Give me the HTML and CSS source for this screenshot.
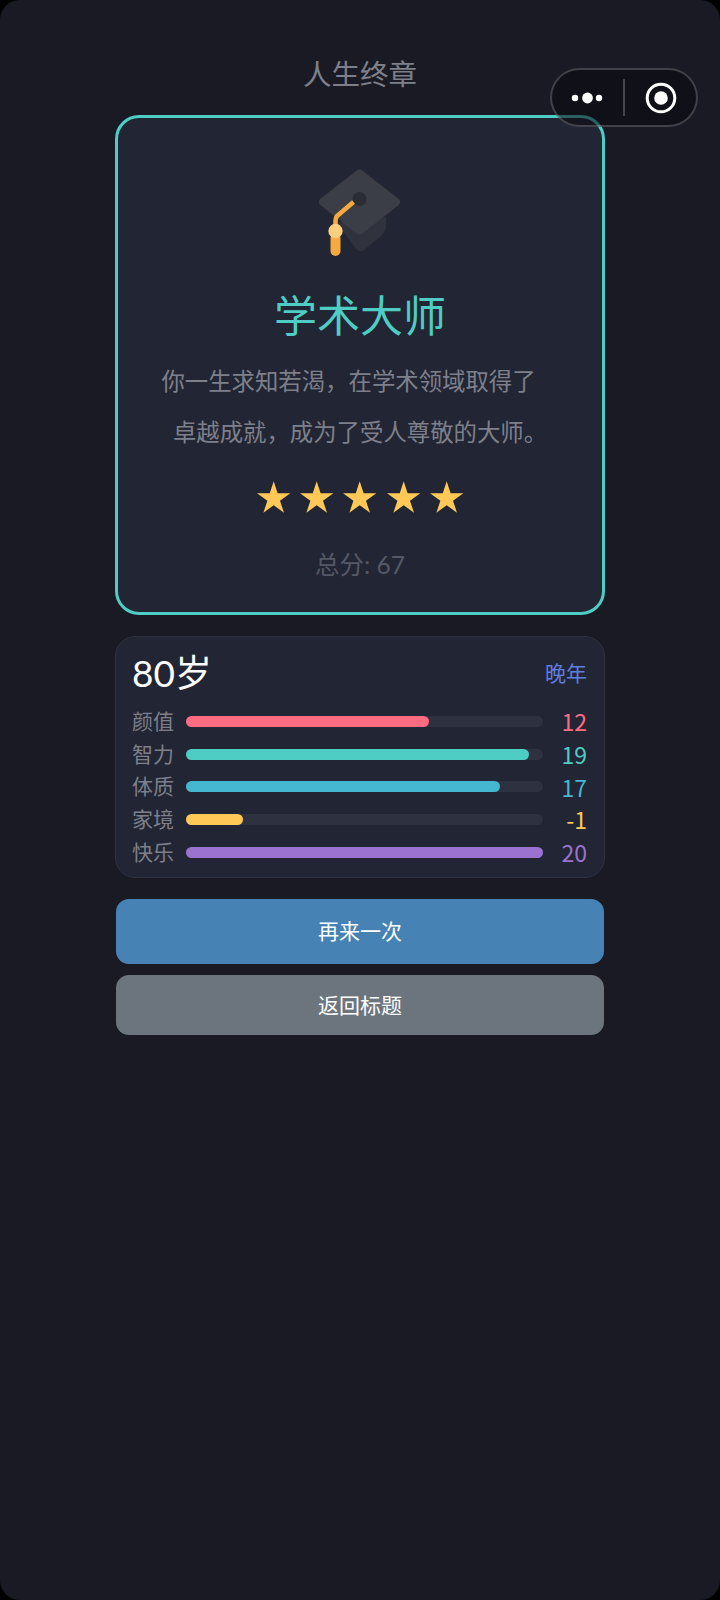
FILE: index.html
```html
<!DOCTYPE html>
<html lang="zh-CN">
<head>
  <meta charset="UTF-8" />
  <meta name="viewport" content="width=device-width, initial-scale=1.0"/>
  <title>人生终章</title>
  <link rel="stylesheet" href="styles.css">
</head>
<body>
  <div class="page">
    <!-- WeChat mini program capsule -->
    <div class="capsule">
      <svg class="capsule-more" width="36" height="14" viewBox="0 0 36 14">
        <circle cx="6" cy="7" r="3.2" fill="#fff"/>
        <circle cx="18.5" cy="7" r="5.4" fill="#fff"/>
        <circle cx="30" cy="7" r="3.2" fill="#fff"/>
      </svg>
      <div class="capsule-line"></div>
      <svg class="capsule-close" width="32" height="32" viewBox="0 0 32 32">
        <circle cx="16" cy="16" r="13.8" fill="none" stroke="#fff" stroke-width="3"/>
        <circle cx="16" cy="16" r="6.8" fill="#fff"/>
      </svg>
    </div>

    <div class="page-title">人生终章</div>

    <div class="ending-card">
      <svg class="ending-icon" width="90" height="90" viewBox="0 0 90 90">
        <path d="M22 56 L41 82 Q45 86 49 83 L66 69 Q73 62 71 50 Z" fill="#30333d"/>
        <polygon points="8,35 44.5,6.5 81,35 44.5,63.5" fill="#3b3e46" stroke="#3b3e46" stroke-width="8" stroke-linejoin="round"/>
        <circle cx="44.5" cy="32" r="7" fill="#2a2d35"/>
        <path d="M38.5 35 L22 49 Q20.5 51 20.5 54 L20.5 64" fill="none" stroke="#f6a93f" stroke-width="4.6"/>
        <rect x="15.5" y="66" width="10" height="23" rx="5" fill="#f6a93f"/>
        <circle cx="20.5" cy="64" r="7.2" fill="#f8cf7f"/>
      </svg>
      <div class="ending-name">学术大师</div>
      <div class="ending-desc">
        <div class="desc-line first">你一生求知若渴，在学术领域取得了</div>
        <div class="desc-line">卓越成就，成为了受人尊敬的大师。</div>
      </div>
      <div class="stars">
        <svg class="star" viewBox="0 0 34 32"><polygon points="17,0 21,12.2 34,12.2 23.4,19.8 27.5,32 17,24.4 6.5,32 10.6,19.8 0,12.2 13,12.2"/></svg>
        <svg class="star" viewBox="0 0 34 32"><polygon points="17,0 21,12.2 34,12.2 23.4,19.8 27.5,32 17,24.4 6.5,32 10.6,19.8 0,12.2 13,12.2"/></svg>
        <svg class="star" viewBox="0 0 34 32"><polygon points="17,0 21,12.2 34,12.2 23.4,19.8 27.5,32 17,24.4 6.5,32 10.6,19.8 0,12.2 13,12.2"/></svg>
        <svg class="star" viewBox="0 0 34 32"><polygon points="17,0 21,12.2 34,12.2 23.4,19.8 27.5,32 17,24.4 6.5,32 10.6,19.8 0,12.2 13,12.2"/></svg>
        <svg class="star" viewBox="0 0 34 32"><polygon points="17,0 21,12.2 34,12.2 23.4,19.8 27.5,32 17,24.4 6.5,32 10.6,19.8 0,12.2 13,12.2"/></svg>
      </div>
      <div class="total-score">总分: 67</div>
    </div>

    <div class="stats-card">
      <div class="stats-head">
        <span class="age">80岁</span>
        <span class="stage">晚年</span>
      </div>
      <div class="stat-row">
        <span class="stat-label">颜值</span>
        <div class="stat-track"><div class="stat-fill pink" style="width: 68%"></div></div>
        <span class="stat-value pink-text">12</span>
      </div>
      <div class="stat-row">
        <span class="stat-label">智力</span>
        <div class="stat-track"><div class="stat-fill teal" style="width: 96%"></div></div>
        <span class="stat-value teal-text">19</span>
      </div>
      <div class="stat-row">
        <span class="stat-label">体质</span>
        <div class="stat-track"><div class="stat-fill blue" style="width: 88%"></div></div>
        <span class="stat-value blue-text">17</span>
      </div>
      <div class="stat-row">
        <span class="stat-label">家境</span>
        <div class="stat-track"><div class="stat-fill yellow" style="width: 16%"></div></div>
        <span class="stat-value yellow-text">-1</span>
      </div>
      <div class="stat-row">
        <span class="stat-label">快乐</span>
        <div class="stat-track"><div class="stat-fill purple" style="width: 100%"></div></div>
        <span class="stat-value purple-text">20</span>
      </div>
    </div>

    <button class="btn btn-primary">再来一次</button>
    <button class="btn btn-secondary">返回标题</button>
  </div>
</body>
</html>
```

FILE: styles.css
```css
* {
  box-sizing: border-box;
}

html, body {
  margin: 0;
  height: 100%;
  background: #000;
}

body {
  font-family: Lato, "Noto Sans CJK SC", sans-serif;
}

.page {
  position: relative;
  display: flex;
  flex-direction: column;
  align-items: center;
  height: 1600px;
  background: #1a1a24;
  border-radius: 20px;
  overflow: hidden;
}

.page-title {
  height: 115px;
  padding-top: 53px;
  font-size: 28.5px;
  line-height: 42px;
  color: #7d808b;
}

.capsule {
  position: absolute;
  top: 68px;
  left: 550px;
  width: 148px;
  height: 59px;
  display: flex;
  align-items: center;
  border: 2px solid rgba(255, 255, 255, 0.2);
  border-radius: 30px;
  background: rgba(10, 10, 14, 0.55);
}

.capsule-more {
  margin-left: 17px;
}

.capsule-line {
  width: 2px;
  height: 37px;
  margin-left: 18px;
  background: rgba(255, 255, 255, 0.22);
}

.capsule-close {
  margin-left: 20px;
}

.ending-card {
  width: 490px;
  height: 500px;
  display: flex;
  flex-direction: column;
  align-items: center;
  padding-top: 49px;
  border: 3px solid #4ecdc4;
  border-radius: 24px;
  background: #222533;
}

.ending-name {
  margin-top: 29px;
  font-size: 43px;
  line-height: 60px;
  color: #4ecdc4;
}

.ending-desc {
  margin-top: 10px;
  font-size: 23.4px;
  line-height: 51px;
  color: #7d808b;
  text-align: center;
}

.desc-line.first {
  padding-right: 23px;
}

.stars {
  display: flex;
  gap: 10px;
  margin-top: 23px;
}

.star {
  width: 33.4px;
  height: 32px;
  fill: #ffc857;
}

.total-score {
  margin-top: 35px;
  font-size: 24.5px;
  line-height: 34px;
  color: #555966;
}

.stats-card {
  width: 490px;
  height: 242px;
  margin-top: 21px;
  padding: 9px 17px 0 16px;
  border: 1px solid #2d3140;
  border-radius: 20px;
  background: #222533;
}

.stats-head {
  display: flex;
  justify-content: space-between;
  align-items: center;
  height: 50px;
  margin-bottom: 9px;
}

.age {
  font-size: 37px;
  color: #fff;
}

.stage {
  padding-top: 2px;
  font-size: 21px;
  color: #5f7fe0;
}

.stat-row {
  display: flex;
  align-items: center;
  height: 32.7px;
}

.stat-label {
  width: 54px;
  flex-shrink: 0;
  padding-bottom: 3px;
  font-size: 21px;
  color: #7d808b;
}

.stat-track {
  flex: 1;
  height: 11px;
  border-radius: 6px;
  background: #2d3140;
}

.stat-fill {
  height: 100%;
  border-radius: 6px;
}

.stat-value {
  width: 44px;
  flex-shrink: 0;
  font-family: "Noto Sans CJK SC", sans-serif;
  font-size: 23px;
  line-height: 30px;
  text-align: right;
}

.pink { background: #ff6b81; }
.teal { background: #4ecdc4; }
.blue { background: #45b7d1; }
.yellow { background: #ffc857; }
.purple { background: #9b72cf; }

.pink-text { color: #ff6b81; }
.teal-text { color: #4ecdc4; }
.blue-text { color: #45b7d1; }
.yellow-text { color: #ffc857; }
.purple-text { color: #9b72cf; }

.btn {
  display: block;
  width: 488px;
  padding-bottom: 4px;
  border: none;
  border-radius: 13px;
  font-family: inherit;
  font-size: 21px;
  color: #fff;
}

.btn-primary {
  height: 65px;
  margin-top: 21px;
  background: #4682b4;
}

.btn-secondary {
  height: 60px;
  margin-top: 11px;
  background: #6c757d;
}
```
